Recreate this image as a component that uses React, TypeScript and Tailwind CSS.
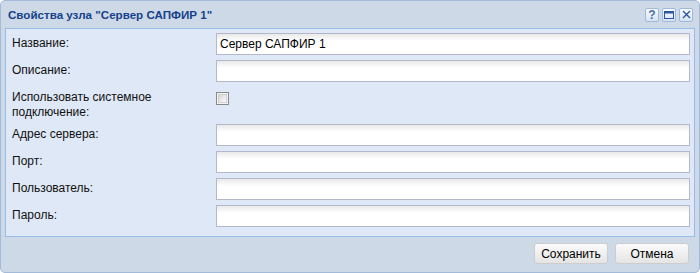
import React from 'react';

const font = { fontFamily: '"Liberation Sans", Arial, sans-serif' };

function ToolButton({ children }: { children: React.ReactNode }) {
  return (
    <div className="w-[14px] h-[14px] rounded-[2px] border border-[#9fb8db] bg-[linear-gradient(to_bottom,#f8fbff,#d6e2f2)] flex items-center justify-center">
      {children}
    </div>
  );
}

function TextField({ value }: { value?: string }) {
  return (
    <div className="flex-1 h-[22px] border border-[#b5b8c8] bg-[linear-gradient(to_bottom,#e9e9e9,#ffffff_7px)] pl-[3px] flex items-center text-[12px] text-black">
      {value}
    </div>
  );
}

function Row({ label, children, last }: { label: string; children: React.ReactNode; last?: boolean }) {
  return (
    <div className={'flex ' + (last ? '' : 'mb-[5px]')}>
      <div className="w-[204px] pr-[5px] pt-[3px] text-[12px] leading-[15px] text-[#111]">{label}</div>
      {children}
    </div>
  );
}

export default function App() {
  return (
    <div className="w-[700px] h-[273px] bg-white" style={font}>
      <div className="w-full h-full rounded-[5px] border border-[#a3bad9] bg-[#ced9e7] flex flex-col">
        {/* header */}
        <div className="h-[27px] flex items-center justify-between pl-[7px] pr-[6px]">
          <span className="text-[11.6px] font-bold text-[#15428b]">Свойства узла "Сервер САПФИР 1"</span>
          <div className="flex gap-[3px]">
            <ToolButton>
              <span className="text-[12px] font-bold leading-none text-[#4a6fa8]">?</span>
            </ToolButton>
            <ToolButton>
              <svg width="10" height="8" viewBox="0 0 10 8">
                <rect x="0.5" y="0.5" width="9" height="7" fill="none" stroke="#2f55a0" strokeWidth="1" />
                <rect x="0.5" y="0.5" width="9" height="2" fill="#2f55a0" />
              </svg>
            </ToolButton>
            <ToolButton>
              <svg width="9" height="9" viewBox="0 0 9 9">
                <path d="M1 1 L8 8 M8 1 L1 8" stroke="#2f55a0" strokeWidth="1.4" />
              </svg>
            </ToolButton>
          </div>
        </div>

        {/* body */}
        <div className="mx-[4px] h-[209px] border border-[#99bbe8] bg-[#dfe8f6] pt-[4px] pl-[6px] pr-[4px]">
          <Row label="Название:">
            <TextField value="Сервер САПФИР 1" />
          </Row>
          <Row label="Описание:">
            <TextField />
          </Row>
          <div className="flex mb-[4px]">
            <div className="w-[204px] pr-[5px] pt-[3px] text-[12px] leading-[15px] text-[#111]">
              Использовать системное подключение:
            </div>
            <div className="mt-[5px] w-[13px] h-[13px] border border-[#8a8a8a] bg-[#f4f4f4] p-[1px]">
              <div className="w-full h-full border border-[#cfcfcf] bg-[linear-gradient(135deg,#d6d6d6,#fbfbfb)]" />
            </div>
          </div>
          <Row label="Адрес сервера:">
            <TextField />
          </Row>
          <Row label="Порт:">
            <TextField />
          </Row>
          <Row label="Пользователь:">
            <TextField />
          </Row>
          <Row label="Пароль:" last>
            <TextField />
          </Row>
        </div>

        {/* footer */}
        <div className="flex justify-end gap-[7px] pt-[6px] pr-[10px]">
          <button className="w-[74px] h-[21px] rounded-[3px] border border-[#cdcdcd] bg-[linear-gradient(to_bottom,#fbfbfb,#e4e4e4)] text-[12px] text-black">
            Сохранить
          </button>
          <button className="w-[74px] h-[21px] rounded-[3px] border border-[#cdcdcd] bg-[linear-gradient(to_bottom,#fbfbfb,#e4e4e4)] text-[12px] text-black">
            Отмена
          </button>
        </div>
      </div>
    </div>
  );
}
